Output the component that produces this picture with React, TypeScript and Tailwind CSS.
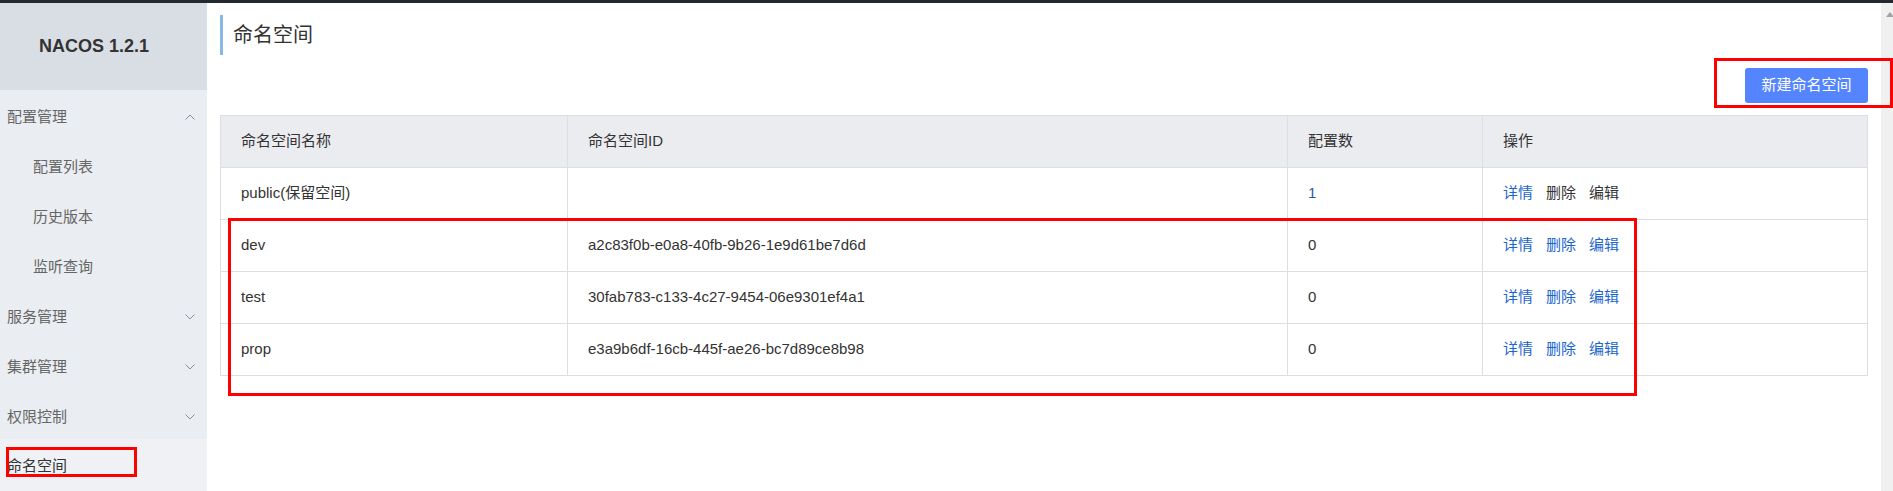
import React from 'react';

type MenuItem = {
  label: string;
  sub?: boolean;
  chevron?: 'up' | 'down';
};

const menu: MenuItem[] = [
  { label: '配置管理', chevron: 'up' },
  { label: '配置列表', sub: true },
  { label: '历史版本', sub: true },
  { label: '监听查询', sub: true },
  { label: '服务管理', chevron: 'down' },
  { label: '集群管理', chevron: 'down' },
  { label: '权限控制', chevron: 'down' },
];

type Row = {
  name: string;
  id: string;
  count: string;
  reserved?: boolean;
};

const rows: Row[] = [
  { name: 'public(保留空间)', id: '', count: '1', reserved: true },
  { name: 'dev', id: 'a2c83f0b-e0a8-40fb-9b26-1e9d61be7d6d', count: '0' },
  { name: 'test', id: '30fab783-c133-4c27-9454-06e9301ef4a1', count: '0' },
  { name: 'prop', id: 'e3a9b6df-16cb-445f-ae26-bc7d89ce8b98', count: '0' },
];

function Chevron({ dir }: { dir: 'up' | 'down' }) {
  return (
    <svg width="10" height="6" viewBox="0 0 10 6" fill="none">
      <polyline
        points={dir === 'up' ? '0.5,5.5 5,1 9.5,5.5' : '0.5,0.5 5,5 9.5,0.5'}
        stroke="#8a8e96"
        strokeWidth="1"
      />
    </svg>
  );
}

function Sidebar() {
  return (
    <aside className="w-[207px] flex flex-col shrink-0">
      {/* Logo */}
      <div className="h-[87px] bg-[#d9dee4] flex items-center">
        <div className="w-[188px] text-center text-[18px] font-bold text-[#333]">NACOS 1.2.1</div>
      </div>

      {/* Menu */}
      <div className="h-[350px] bg-[#eaedf1] pt-[2px] overflow-hidden">
        {menu.map((m) => (
          <div
            key={m.label}
            className={`h-[50px] flex items-center justify-between pr-[12px] text-[15px] text-[#666] ${m.sub ? 'pl-[33px]' : 'pl-[7px]'}`}
          >
            <span>{m.label}</span>
            {m.chevron && <Chevron dir={m.chevron} />}
          </div>
        ))}
      </div>

      <div className="flex-1 bg-[#eff1f5] pt-[2px]">
        <div className="h-[50px] flex items-center pl-[7px] text-[15px] text-[#333]">命名空间</div>
      </div>
    </aside>
  );
}

function NamespaceTable() {
  const th = 'h-[52px] border border-[#dcdee3] bg-[#ebecf0] pl-[20px] text-left font-normal text-[15px] text-[#333]';
  const td = 'h-[52px] border border-[#dcdee3] pl-[20px] text-[15px] text-[#333]';
  return (
    <table className="w-full table-fixed border-collapse">
      <colgroup>
        <col className="w-[347px]" />
        <col className="w-[720px]" />
        <col className="w-[195px]" />
        <col />
      </colgroup>
      <thead>
        <tr>
          <th className={th}>命名空间名称</th>
          <th className={th}>命名空间ID</th>
          <th className={th}>配置数</th>
          <th className={th}>操作</th>
        </tr>
      </thead>
      <tbody>
        {rows.map((r) => (
          <tr key={r.name}>
            <td className={td}>{r.name}</td>
            <td className={td}>{r.id}</td>
            <td className={td}>
              <span className={r.reserved ? 'text-[#2b5aa0]' : ''}>{r.count}</span>
            </td>
            <td className={td}>
              <div className="flex gap-[13px]">
                <span className="text-[#1b66cc]">详情</span>
                <span className={r.reserved ? 'text-[#333]' : 'text-[#1b66cc]'}>删除</span>
                <span className={r.reserved ? 'text-[#333]' : 'text-[#1b66cc]'}>编辑</span>
              </div>
            </td>
          </tr>
        ))}
      </tbody>
    </table>
  );
}

export default function App() {
  return (
    <div className="relative w-[1893px] h-[491px] overflow-hidden bg-white font-['Liberation_Sans','Noto_Sans_CJK_SC',sans-serif]">
      <div className="h-[3px] bg-[#23292f]" />

      <div className="flex h-[488px]">
        <Sidebar />

        <main className="flex-1 px-[13px] pt-[12px]">
          {/* Page title */}
          <div className="h-[40px] flex items-center border-l-[3px] border-[#88b7e3] pl-[10px] text-[20px] text-[#333]">
            命名空间
          </div>

          <div className="mt-[13px] flex justify-end">
            <button className="h-[35px] w-[123px] rounded-[3px] bg-[#5584ff] text-white text-[15px]">
              新建命名空间
            </button>
          </div>

          <div className="mt-[12px]">
            <NamespaceTable />
          </div>
        </main>

        {/* Scrollbar */}
        <div className="w-[12px] shrink-0 bg-[#f0f0f0] pt-[9px] pl-[5px]">
          <div className="w-0 h-0 border-x-[4px] border-x-transparent border-b-[5px] border-b-[#a3a3a3]" />
        </div>
      </div>

      {/* Red annotation boxes */}
      <div className="absolute left-[6px] top-[447px] w-[131px] h-[30px] border-[3px] border-[#ff0000]" />
      <div className="absolute left-[1714px] top-[58px] w-[179px] h-[50px] border-[3px] border-[#ff0000]" />
      <div className="absolute left-[228px] top-[218px] w-[1409px] h-[178px] border-[3px] border-[#ff0000]" />
    </div>
  );
}
